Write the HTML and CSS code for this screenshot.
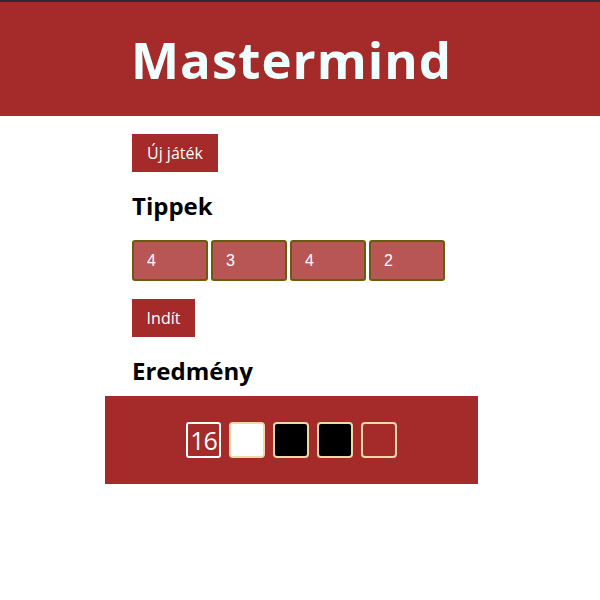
FILE: index.html
```html
<!DOCTYPE html>
<html lang="hu">
<head>
<meta charset="utf-8">
<title>Mastermind</title>
<link rel="stylesheet" href="styles.css">
</head>
<body>
<header class="top">
  <h1 class="title">Mastermind</h1>
</header>
<main class="main">
  <section class="section">
    <button class="btn btn-new">Új játék</button>
    <h2 class="heading heading-tips">Tippek</h2>
    <div class="guesses">
      <input class="guess" type="text" value="4">
      <input class="guess" type="text" value="3">
      <input class="guess" type="text" value="4">
      <input class="guess" type="text" value="2">
    </div>
    <button class="btn btn-start">Indít</button>
    <h2 class="heading heading-result">Eredmény</h2>
  </section>
  <div class="result">
    <div class="row">
      <div class="cell cell-num">16</div>
      <div class="cell peg-white"></div>
      <div class="cell peg-black"></div>
      <div class="cell peg-black"></div>
      <div class="cell peg-empty"></div>
    </div>
  </div>
</main>
</body>
</html>
```
FILE: styles.css
```css
html, body {
  margin: 0;
  padding: 0;
  background: #ffffff;
  font-family: "Open Sans", "Noto Sans", sans-serif;
}
body {
  border-top: 2px solid #2b2b2b;
}
.top {
  background: #a52a2a;
  height: 114px;
  display: flex;
  align-items: center;
  padding-left: 131px;
}
.title {
  margin: 0;
  color: #f0ffff;
  font-size: 51px;
  font-weight: 700;
  letter-spacing: 1px;
  line-height: 1;
}
.main {
  width: 373px;
  margin-left: 105px;
}
.section {
  padding-left: 27px;
  padding-top: 18px;
}
.btn {
  display: block;
  background: #a52a2a;
  color: #ffffff;
  border: none;
  font-family: "Open Sans", "Noto Sans", sans-serif;
  font-size: 16px;
  height: 38px;
  padding: 0 15px;
  margin: 0;
}
.btn-start {
  padding: 0 14px;
  width: 63px;
}
.heading {
  margin: 0;
  font-size: 24px;
  font-weight: 700;
  color: #000;
  line-height: 1;
}
.heading-tips {
  margin-top: 22px;
  margin-bottom: 22px;
}
.heading-result {
  margin-top: 22px;
  margin-bottom: 13px;
}
.guesses {
  display: flex;
  gap: 3px;
  margin-bottom: 18px;
}
.guess {
  box-sizing: border-box;
  width: 76px;
  height: 41px;
  background: #b85555;
  border: 2px solid #6b5a10;
  border-radius: 3px;
  color: #ffffff;
  font-family: "Liberation Sans", Arial, sans-serif;
  font-size: 16px;
  padding: 0 0 0 13px;
  margin: 0;
}
.result {
  background: #a52a2a;
  height: 88px;
  display: flex;
  align-items: center;
  justify-content: center;
}
.row {
  display: flex;
  gap: 8px;
}
.cell {
  box-sizing: border-box;
  width: 36px;
  height: 36px;
  border: 2px solid #f0d9a8;
  border-radius: 4px;
}
.cell-num {
  width: 35px;
  border-color: #ffffff;
  border-radius: 3px;
  color: #ffffff;
  font-size: 25px;
  line-height: 32px;
  text-align: center;
  letter-spacing: -1px;
}
.peg-white { background: #ffffff; }
.peg-black { background: #000000; }
.peg-empty { background: transparent; }
```
